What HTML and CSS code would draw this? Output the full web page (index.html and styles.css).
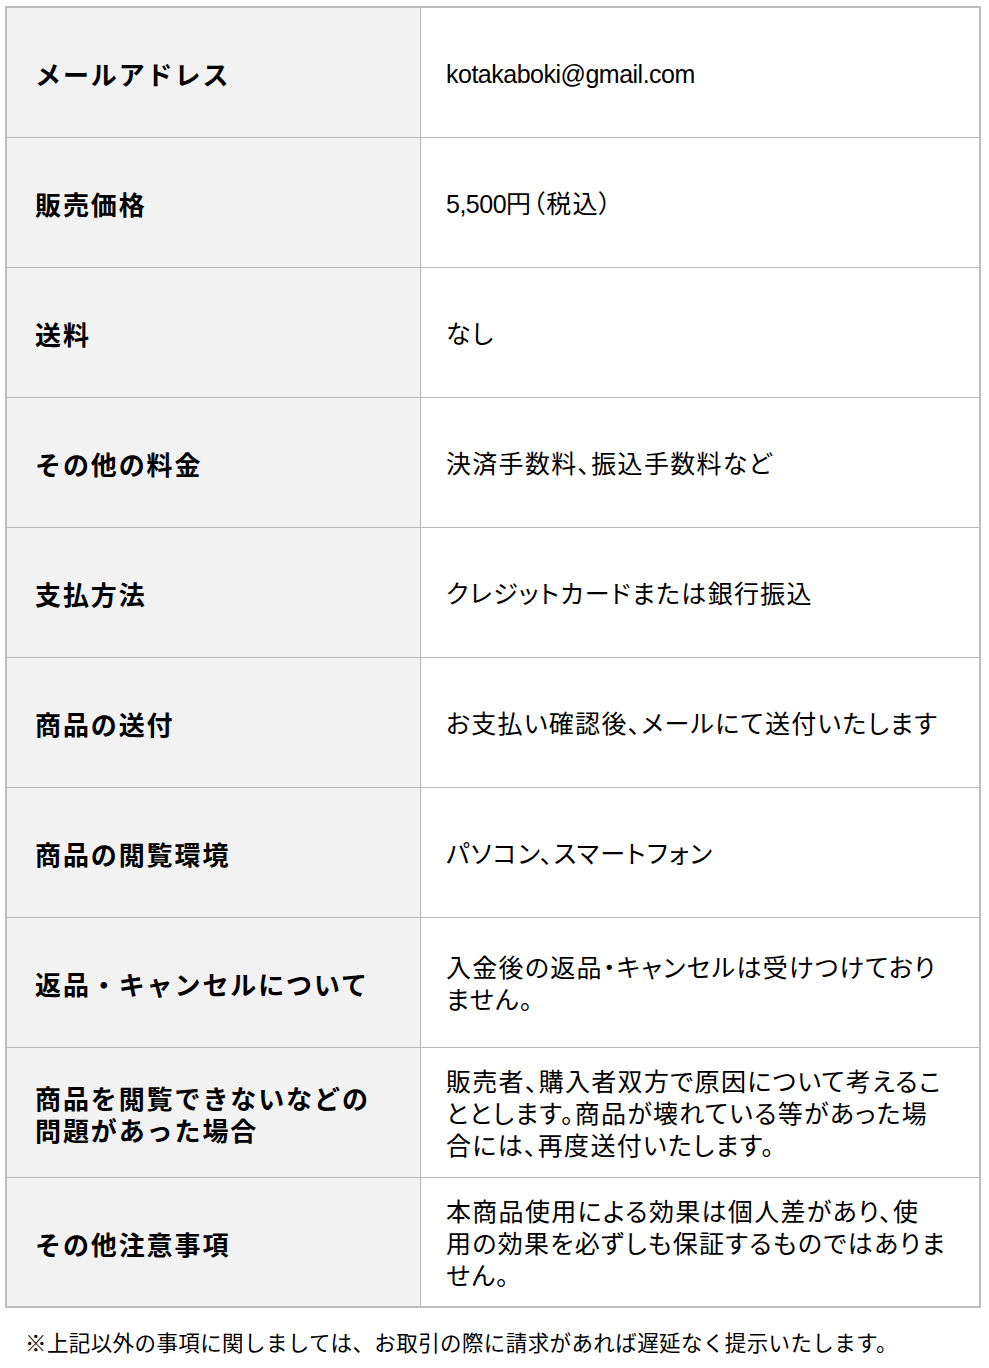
FILE: index.html
```html
<!DOCTYPE html>
<html lang="ja">
<head>
<meta charset="utf-8">
<title>特定商取引法に基づく表記</title>
<link rel="stylesheet" href="styles.css">
</head>
<body>
<table class="info">
  <tr><th>メールアドレス</th><td><span class="latin">kotakaboki@gmail.com</span></td></tr>
  <tr><th>販売価格</th><td><span class="latin">5,500</span>円（税込）</td></tr>
  <tr><th>送料</th><td>なし</td></tr>
  <tr><th>その他の料金</th><td>決済手数料、振込手数料など</td></tr>
  <tr><th>支払方法</th><td>クレジットカードまたは銀行振込</td></tr>
  <tr><th>商品の送付</th><td>お支払い確認後、メールにて送付いたします</td></tr>
  <tr><th>商品の閲覧環境</th><td>パソコン、スマートフォン</td></tr>
  <tr><th>返品・キャンセルについて</th><td>入金後の返品・キャンセルは受けつけており<br>ません。</td></tr>
  <tr><th>商品を閲覧できないなどの<br>問題があった場合</th><td>販売者、購入者双方で原因について考えるこ<br>ととします。商品が壊れている等があった場<br>合には、再度送付いたします。</td></tr>
  <tr><th>その他注意事項</th><td>本商品使用による効果は個人差があり、使<br>用の効果を必ずしも保証するものではありま<br>せん。</td></tr>
</table>
<p class="note">※上記以外の事項に関しましては、お取引の際に請求があれば遅延なく提示いたします。</p>
</body>
</html>
```
FILE: styles.css
```css
html, body {
  margin: 0;
  padding: 0;
  background: #fff;
}
body {
  font-family: "Noto Sans CJK JP", "Noto Sans", sans-serif;
  color: #000;
}
.info {
  border-collapse: collapse;
  width: 976px;
  margin: 6px 0 0 5px;
  border: 2px solid #bdbdbd;
  table-layout: fixed;
}
.info tr {
  height: 130px;
}
.info th,
.info td {
  border: 1px solid #b8b8b8;
  vertical-align: middle;
  line-height: 32px;
}
.info th {
  width: 385px;
  background: #f2f2f2;
  text-align: left;
  font-weight: 700;
  font-size: 26px;
  letter-spacing: 1.9px;
  padding: 4px 0 0 28px;
}
.info td {
  font-family: "Liberation Sans", "Noto Sans CJK JP", sans-serif;
  font-feature-settings: "palt";
  font-size: 25px;
  letter-spacing: 1.3px;
  padding: 4px 12px 0 25px;
  font-weight: 400;
}
.latin {
  letter-spacing: -0.5px;
}
.note {
  margin: 18px 0 0 25px;
  font-size: 21.5px;
  letter-spacing: 0.4px;
  line-height: 32px;
}
```
